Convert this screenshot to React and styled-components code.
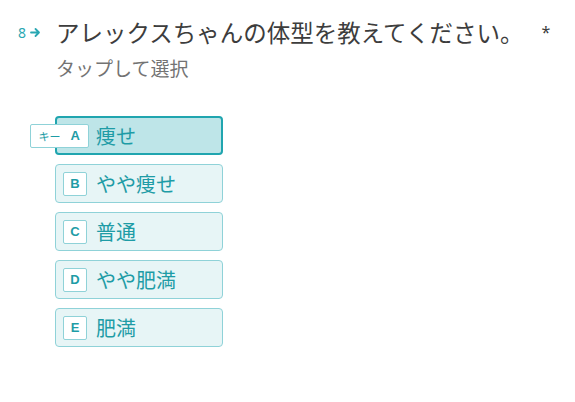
import React from "react";
import styled, { createGlobalStyle } from "styled-components";

const GlobalStyle = createGlobalStyle`
  body {
    margin: 0;
    background: #ffffff;
    font-family: "Noto Sans CJK JP", "Noto Sans", sans-serif;
  }
`;

const Page = styled.div`
  display: flex;
  padding: 14px 0 0 0;
`;

const Number = styled.div`
  width: 56px;
  flex-shrink: 0;
  display: flex;
  align-items: center;
  gap: 4px;
  padding-left: 18px;
  box-sizing: border-box;
  height: 36px;
  color: #2aa7b2;
  font-family: "Noto Sans", sans-serif;
  font-size: 14px;
`;

const Body = styled.div`
  display: flex;
  flex-direction: column;
`;

const Title = styled.div`
  font-size: 23.5px;
  line-height: 36px;
  color: #3d3d3d;
  display: flex;
  gap: 18px;
`;

const Star = styled.span`
  font-size: 16px;
  font-family: "Noto Sans", sans-serif;
`;

const Sub = styled.div`
  font-size: 19px;
  line-height: 28px;
  color: #737373;
  margin-top: 4px;
`;

const Options = styled.div`
  display: flex;
  flex-direction: column;
  gap: 9px;
  margin-top: 34px;
  margin-left: -1px;
`;

const Option = styled.div`
  position: relative;
  width: 168px;
  height: 39px;
  box-sizing: border-box;
  display: flex;
  align-items: center;
  gap: 9px;
  padding-left: ${({ $selected }) => ($selected ? "6px" : "7px")};
  border-radius: 4px;
  border: ${({ $selected }) =>
    $selected ? "2px solid #20a5af" : "1px solid #8fd2d8"};
  background: ${({ $selected }) => ($selected ? "#bee5e8" : "#e7f5f6")};
  color: #1e9ca6;
  font-size: 20px;
`;

const Key = styled.div`
  width: 24px;
  height: 24px;
  box-sizing: border-box;
  display: flex;
  align-items: center;
  justify-content: center;
  background: #ffffff;
  border: 1px solid #8fd2d8;
  border-radius: 2px;
  font-family: "Liberation Sans", sans-serif;
  font-weight: 700;
  font-size: 13px;
  color: #1e9ca6;
`;

const HintKey = styled(Key)`
  position: absolute;
  right: calc(100% - 32px);
  width: auto;
  white-space: nowrap;
  padding: 0 8px 0 8px;
  gap: 10px;
  font-family: "Noto Sans CJK JP", sans-serif;
  font-weight: 400;
  font-size: 11px;
  & b {
    font-weight: 700;
    font-size: 13px;
    font-family: "Liberation Sans", sans-serif;
  }
`;

const Arrow = () => (
  <svg width="11" height="11" viewBox="0 0 11 11">
    <path
      d="M1 5.5 H9 M5.5 2 L9 5.5 L5.5 9"
      stroke="#2aa7b2"
      strokeWidth="1.8"
      fill="none"
      strokeLinecap="round"
      strokeLinejoin="round"
    />
  </svg>
);

const choices = [
  { key: "A", label: "痩せ" },
  { key: "B", label: "やや痩せ" },
  { key: "C", label: "普通" },
  { key: "D", label: "やや肥満" },
  { key: "E", label: "肥満" },
];

export default function App() {
  return (
    <>
      <GlobalStyle />
      <Page>
        <Number>
          8<Arrow />
        </Number>
        <Body>
          <Title>
            アレックスちゃんの体型を教えてください。<Star>*</Star>
          </Title>
          <Sub>タップして選択</Sub>
          <Options>
            {choices.map((c, i) =>
              i === 0 ? (
                <Option key={c.key} $selected>
                  <HintKey>
                    キー<b>{c.key}</b>
                  </HintKey>
                  <Key style={{ visibility: "hidden" }}>{c.key}</Key>
                  {c.label}
                </Option>
              ) : (
                <Option key={c.key}>
                  <Key>{c.key}</Key>
                  {c.label}
                </Option>
              )
            )}
          </Options>
        </Body>
      </Page>
    </>
  );
}
